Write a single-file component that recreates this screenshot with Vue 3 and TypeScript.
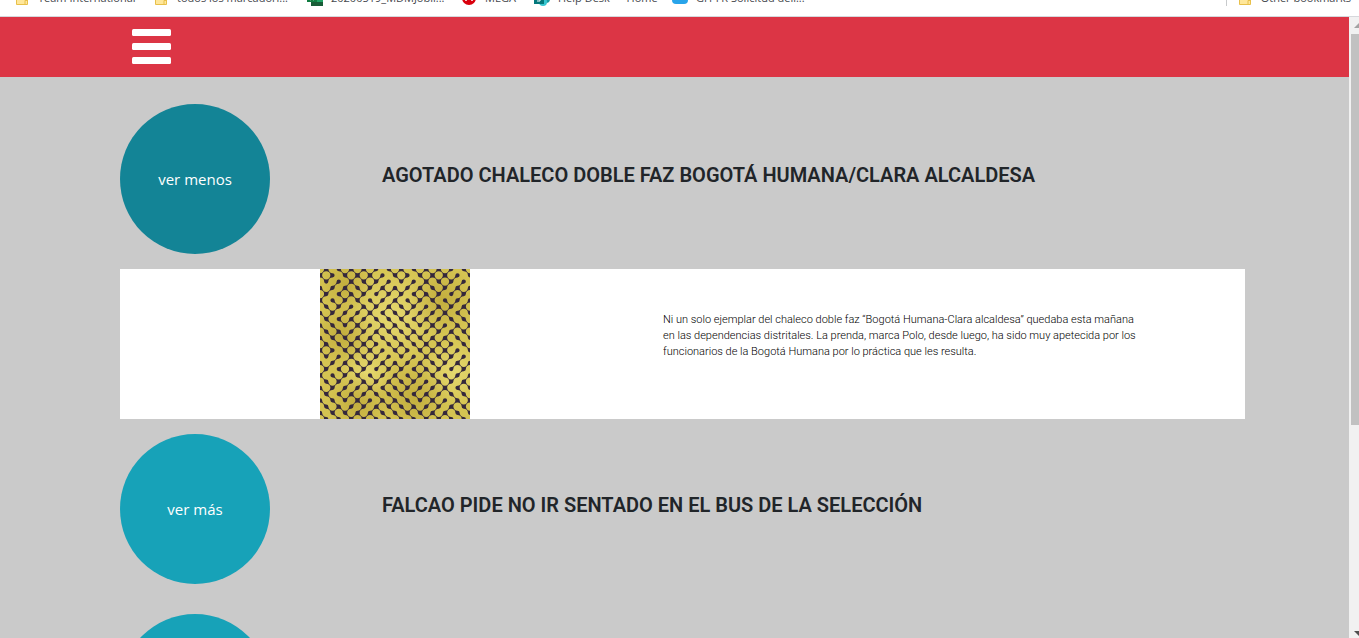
<script setup lang="ts">
import { ref } from 'vue'

interface Bookmark {
  label: string
  icon: 'folder' | 'sheet' | 'mega' | 'share' | 'cloud'
  slot: string
}

interface Article {
  id: number
  title: string
  body: string
  open: boolean
}

const bookmarks: Bookmark[] = [
  { label: 'Team International', icon: 'folder', slot: 'b1' },
  { label: 'todos los marcadori...', icon: 'folder', slot: 'b2' },
  { label: '20200519_MDMJobli...', icon: 'sheet', slot: 'b3' },
  { label: 'MEGA', icon: 'mega', slot: 'b4' },
  { label: 'Help Desk — Home', icon: 'share', slot: 'b5' },
  { label: 'GH-FR Solicitud deli...', icon: 'cloud', slot: 'b6' },
]

const articles = ref<Article[]>([
  {
    id: 1,
    title: 'AGOTADO CHALECO DOBLE FAZ BOGOTÁ HUMANA/CLARA ALCALDESA',
    body: 'Ni un solo ejemplar del chaleco doble faz “Bogotá Humana-Clara alcaldesa” quedaba esta mañana en las dependencias distritales. La prenda, marca Polo, desde luego, ha sido muy apetecida por los funcionarios de la Bogotá Humana por lo práctica que les resulta.',
    open: true,
  },
  { id: 2, title: 'FALCAO PIDE NO IR SENTADO EN EL BUS DE LA SELECCIÓN', body: '', open: false },
  { id: 3, title: '', body: '', open: false },
])

// Each digit is one cell of the woven tile: 1 joins its two dark corners.
const weave = [
  '110111111001',
  '110011111100',
  '001011011010',
  '110110110111',
  '100111100010',
  '101100101101',
  '011010111011',
  '110101011010',
  '010111100101',
  '101001110111',
  '011110101101',
  '101011111010',
]

function cellPath(x: number, y: number, linked: boolean): string {
  const falling = (x + y) % 2 === 1
  const px = (n: number) => x * 100 + (falling ? n : 100 - n)
  const py = (n: number) => y * 100 + n
  const s = falling ? 0 : 1
  if (linked) {
    return `M${px(0)} ${py(0)}L${px(34)} ${py(0)}A66 66 0 0 ${s} ${px(100)} ${py(66)}L${px(100)} ${py(100)}L${px(66)} ${py(100)}A66 66 0 0 ${s} ${px(0)} ${py(34)}Z`
  }
  const t = falling ? 1 : 0
  return `M${px(0)} ${py(0)}L${px(34)} ${py(0)}A34 34 0 0 ${t} ${px(0)} ${py(34)}ZM${px(100)} ${py(100)}L${px(66)} ${py(100)}A34 34 0 0 ${t} ${px(100)} ${py(66)}Z`
}

const weavePath = weave
  .map((row, y) => [...row].map((c, x) => cellPath(x, y, c === '1')).join(''))
  .join('')
</script>

<template>
  <div class="screen">
    <div class="bookmarks">
      <a v-for="b in bookmarks" :key="b.slot" href="#" class="bookmark" :class="b.slot">
        <svg v-if="b.icon === 'folder'" class="ico" viewBox="0 0 16 16">
          <path d="M2.500 2.500h11v12h-11z" fill="#ffe79a" stroke="#e8c04a" />
          <path d="M11 14v-3.500h2.500" fill="none" stroke="#e8c04a" />
        </svg>
        <svg v-else-if="b.icon === 'sheet'" class="ico" viewBox="0 0 16 16">
          <path d="M4 1h12v15H4z" fill="#185c37" />
          <path d="M10 1h6v11h-6z" fill="#21a366" />
          <path d="M0 3h10v9H0z" fill="#107c41" />
          <path d="M3 5l4 5M7 5l-4 5" stroke="#fff" stroke-width="1.500" />
        </svg>
        <svg v-else-if="b.icon === 'mega'" class="ico" viewBox="0 0 16 16">
          <circle cx="8" cy="8" r="7" fill="#d9000d" />
          <path d="M5 11V6l3 3 3-3v5" fill="none" stroke="#fff" stroke-width="1.500" />
        </svg>
        <svg v-else-if="b.icon === 'share'" class="ico" viewBox="0 0 16 16">
          <circle cx="8" cy="5" r="5" fill="#036c70" />
          <circle cx="12" cy="9" r="4" fill="#1a9ba1" />
          <circle cx="9" cy="12" r="4" fill="#37c6d0" />
          <path d="M0 4h10v10H0z" fill="#03787c" />
          <path d="M3 11h3V9H3V6h3" fill="none" stroke="#fff" />
        </svg>
        <svg v-else class="ico" viewBox="0 0 16 16">
          <rect y="2" width="16" height="12" rx="4" fill="#28a4ea" />
        </svg>
        <span>{{ b.label }}</span>
      </a>
      <a href="#" class="bookmark other">
        <svg class="ico" viewBox="0 0 16 16">
          <path d="M2.500 2.500h11v12h-11z" fill="#ffe79a" stroke="#e8c04a" />
          <path d="M11 14v-3.500h2.500" fill="none" stroke="#e8c04a" />
        </svg>
        <span>Other bookmarks</span>
      </a>
    </div>

    <div class="view">
      <div class="page">
        <nav class="navbar">
          <button type="button" class="burger" aria-label="Menú">
            <svg viewBox="0 0 39 36">
              <rect y="0" width="39" height="7" rx="1.500" />
              <rect y="14" width="39" height="7" rx="1.500" />
              <rect y="28" width="39" height="7" rx="1.500" />
            </svg>
          </button>
        </nav>
        <main class="content">
          <article v-for="a in articles" :key="a.id" class="item">
            <header class="head">
              <button
                type="button"
                class="toggle"
                :class="{ active: a.open }"
                :aria-expanded="a.open"
                @click="a.open = !a.open"
              >
                {{ a.open ? 'ver menos' : 'ver más' }}
              </button>
              <h5 class="title">{{ a.title }}</h5>
            </header>
            <section v-if="a.open" class="panel">
              <svg class="photo" viewBox="0 0 2400 2400">
                <defs>
                  <pattern id="weave" width="1200" height="1200" patternUnits="userSpaceOnUse">
                    <path :d="weavePath" fill="#35283b" />
                  </pattern>
                  <radialGradient id="shade"><stop offset="0" stop-color="#a88d20" stop-opacity=".4" /><stop offset="1" stop-color="#a88d20" stop-opacity="0" /></radialGradient>
                  <radialGradient id="glow"><stop offset="0" stop-color="#ebe07a" stop-opacity=".7" /><stop offset="1" stop-color="#ebe07a" stop-opacity="0" /></radialGradient>
                </defs>
                <rect width="2400" height="2400" fill="#d5c452" />
                <circle cx="1150" cy="750" r="800" fill="url(#glow)" />
                <circle cx="2150" cy="1650" r="550" fill="url(#glow)" />
                <circle cx="750" cy="1650" r="450" fill="url(#glow)" />
                <circle cx="350" cy="1050" r="500" fill="url(#shade)" />
                <circle cx="1950" cy="500" r="550" fill="url(#shade)" />
                <circle cx="600" cy="2150" r="500" fill="url(#shade)" />
                <circle cx="1500" cy="2050" r="600" fill="url(#shade)" />
                <circle cx="400" cy="250" r="450" fill="url(#shade)" />
                <rect width="2400" height="2400" fill="url(#weave)" />
              </svg>
              <p class="body">{{ a.body }}</p>
            </section>
          </article>
        </main>
      </div>
      <div class="scrollbar" aria-hidden="true">
        <svg class="arrow" viewBox="0 0 8 17"><path d="M3 11L8 6V11Z" fill="#a3a3a3" /></svg>
        <div class="thumb"></div>
        <svg class="arrow" viewBox="0 0 8 17"><path d="M3 10H8V15Z" fill="#505050" /></svg>
      </div>
    </div>
  </div>
</template>

<style>
body {
  margin: 0;
  overflow: hidden;
}
</style>

<style scoped>
.screen {
  height: 100vh;
  display: flex;
  flex-direction: column;
  overflow: hidden;
  background: #fff;
}
.bookmarks {
  height: 16px;
  flex: none;
  display: flex;
  align-items: flex-end;
  padding: 0 8px 0 14px;
  border-bottom: 1px solid #d6d8dc;
  overflow: hidden;
}
.bookmark {
  display: flex;
  align-items: center;
  gap: 8px;
  height: 16px;
  margin-bottom: 10px;
  flex: none;
  color: #45484d;
  font: 11px/16px 'Open Sans', 'Noto Sans', sans-serif;
  text-decoration: none;
  white-space: nowrap;
}
.ico {
  width: 16px;
  height: 16px;
  flex: none;
}
.b1 {
  width: 139px;
}
.b2 {
  width: 154px;
}
.b3 {
  width: 154px;
}
.b4 {
  width: 73px;
}
.b5 {
  width: 138px;
}
.other {
  margin-left: auto;
  padding-left: 10px;
  border-left: 1px solid #c8cacc;
}
.view {
  flex: 1;
  min-height: 0;
  display: flex;
}
.page {
  flex: 1;
  min-width: 0;
  overflow: hidden;
  background: #cacaca;
}
.navbar {
  height: 60px;
  padding-left: 132px;
  display: flex;
  align-items: center;
  background: #dc3545;
}
.burger {
  width: 39px;
  height: 36px;
  padding: 0;
  border: 0;
  background: none;
  cursor: pointer;
}
.burger svg {
  display: block;
  width: 39px;
  height: 36px;
  fill: #fff;
}
.content {
  padding: 27px 104px 0 120px;
}
.item {
  margin-bottom: 30px;
}
.item:has(.panel) {
  margin-bottom: 15px;
}
.head {
  display: flex;
  align-items: center;
  gap: 112px;
}
.toggle {
  flex: none;
  width: 150px;
  height: 150px;
  border: 0;
  border-radius: 50%;
  background: #17a2b8;
  color: #fff;
  font: 15px/24px 'Open Sans', 'Noto Sans', sans-serif;
  cursor: pointer;
}
.toggle.active {
  background: #138496;
}
.title {
  margin: 0 0 8px;
  color: #212529;
  font: 600 20px/24px Roboto, sans-serif;
}
.panel {
  display: flex;
  align-items: center;
  margin-top: 15px;
  padding-left: 200px;
  background: #fff;
}
.photo {
  flex: none;
  display: block;
  width: 150px;
  height: 150px;
}
.body {
  flex: 1;
  margin: 0 104px 16px 193px;
  color: #000;
  font: 300 11px/16px Roboto, sans-serif;
}
.scrollbar {
  width: 10px;
  flex: none;
  display: flex;
  flex-direction: column;
  align-items: flex-end;
  background: #f1f1f1;
}
.arrow {
  width: 8px;
  height: 17px;
  flex: none;
}
.thumb {
  width: 8px;
  flex: 0 0 63%;
  margin-bottom: auto;
  background: #c1c1c1;
}
</style>
